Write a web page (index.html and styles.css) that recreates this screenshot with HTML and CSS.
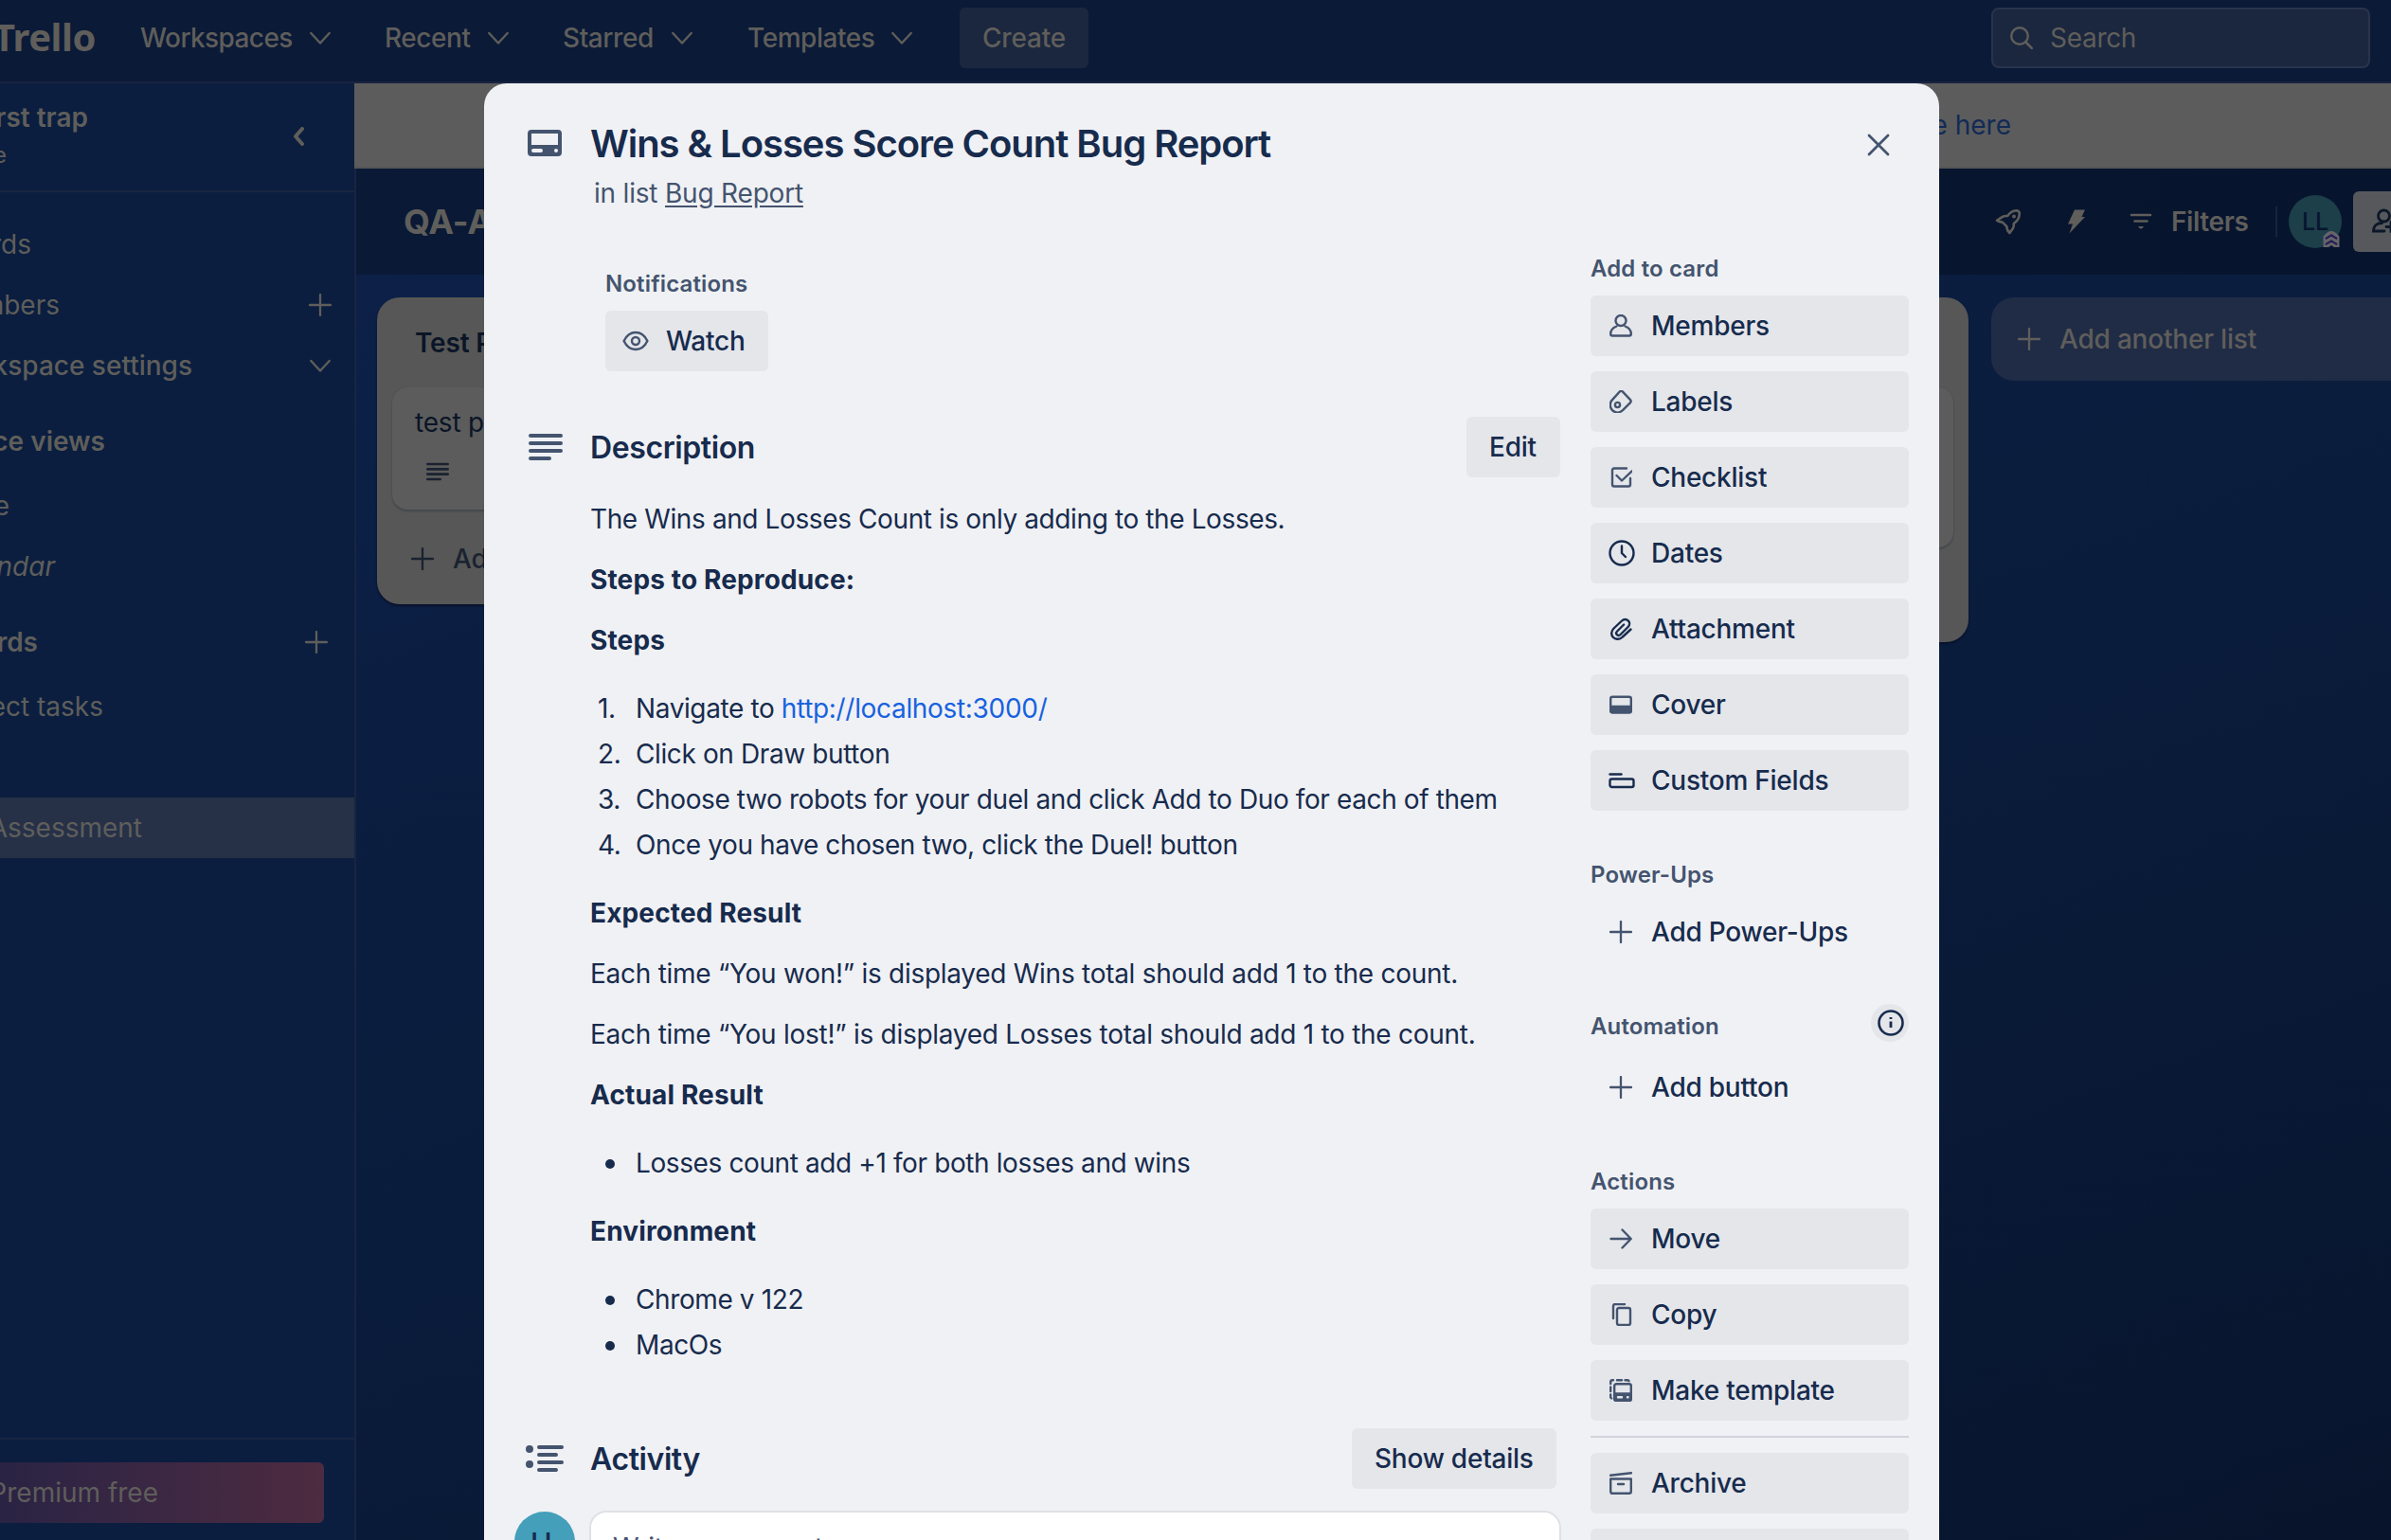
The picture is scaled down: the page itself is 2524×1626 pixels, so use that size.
FILE: index.html
```html
<!DOCTYPE html>
<html lang="en">
<head>
<meta charset="utf-8">
<title>Wins &amp; Losses Score Count Bug Report</title>
<link rel="stylesheet" href="styles.css">
</head>
<body>
<svg class="defs" aria-hidden="true">
  <symbol id="chev" viewBox="0 0 24 24"><path d="M2.300 7 12 17.500 21.700 7" fill="none" stroke="currentColor" stroke-width="2.400" stroke-linecap="round" stroke-linejoin="round"/></symbol>
  <symbol id="plus" viewBox="0 0 24 24"><path d="M12 1v22M1 12h22" fill="none" stroke="currentColor" stroke-width="2.300" stroke-linecap="round"/></symbol>
  <symbol id="lines" viewBox="0 0 36 28"><path d="M2 2h32M2 10h32M2 18h32M2 26h20" fill="none" stroke="currentColor" stroke-width="4" stroke-linecap="round"/></symbol>
</svg>
<div class="app">
  <header class="topbar">
    <span class="logo">Trello</span>
    <nav class="menu">
      <span class="item ws"><b>Workspaces</b><svg class="chev"><use href="#chev"/></svg></span>
      <span class="item rc"><b>Recent</b><svg class="chev"><use href="#chev"/></svg></span>
      <span class="item st"><b>Starred</b><svg class="chev"><use href="#chev"/></svg></span>
      <span class="item tm"><b>Templates</b><svg class="chev"><use href="#chev"/></svg></span>
    </nav>
    <span class="create">Create</span>
    <span class="search"><svg viewBox="0 0 24 24"><circle cx="10" cy="10" r="8.800" fill="none" stroke="currentColor" stroke-width="2.400"/><path d="m16.500 16.500 6.300 6.300" stroke="currentColor" stroke-width="2.600" stroke-linecap="round"/></svg>Search</span>
  </header>
  <div class="main">
    <aside class="side">
      <div class="workspace">
        <div class="names"><b>First trap</b><small>Free</small></div>
        <svg class="collapse" viewBox="0 0 12 20"><path d="M10 2 3 10l7 8" fill="none" stroke="currentColor" stroke-width="4" stroke-linecap="round" stroke-linejoin="round"/></svg>
      </div>
      <div class="row boards"><span>Boards</span></div>
      <div class="row members"><span>Members</span><svg class="act"><use href="#plus"/></svg></div>
      <div class="row settings"><span>Workspace settings</span><svg class="act"><use href="#chev"/></svg></div>
      <div class="row views"><span>Workspace views</span></div>
      <div class="row table"><span>Table</span></div>
      <div class="row calendar"><span>Calendar</span></div>
      <div class="row yours"><span>Your boards</span><svg class="act"><use href="#plus"/></svg></div>
      <div class="row tasks"><span>Project tasks</span></div>
      <div class="row current"><span>QA-Assessment</span></div>
      <div class="promo"><div class="premium"><span>Try Premium free</span></div></div>
    </aside>
    <section class="board">
      <div class="banner"><span>Subscribe here</span></div>
      <div class="boardbar">
        <h1>QA-Assessment</h1>
        <div class="tools">
          <svg class="rocket" viewBox="0 0 28 28"><path d="M25.800 5.500c-.1-2-1.300-3.300-3.300-3.300-4 .2-7 2.300-9.300 5.800-2.500-.2-4.200.2-5.700 1.200L2 12.800c1.500 1.200 3.500 1.700 5.800 1.800l4.600 4.600c0 2.500 1 5 3 6.800l3.600-5c.8-1.500 1-3 .8-5 4-2.800 6-6.500 6-10.500z" fill="none" stroke="currentColor" stroke-width="2.600" stroke-linejoin="round"/><circle cx="20" cy="8.500" r="1.900" fill="currentColor"/></svg>
          <svg class="bolt" viewBox="0 0 20 26"><path d="M8 .5h11L15.500 8H19L2.500 25.500 6 15.500H1z" fill="currentColor"/></svg>
          <svg class="filter" viewBox="0 0 24 18"><path d="M2 2h20M5.500 8.500h13" stroke="currentColor" stroke-width="2.600" stroke-linecap="round"/><path d="M9 14h6q-3 5-6 0z" fill="currentColor"/></svg>
          <span class="filters">Filters</span>
          <i class="sep"></i>
          <span class="avatar">LL<svg viewBox="0 0 18 18"><path d="M0 6Q9-6 18 6v12h-6l-3-2-3 2H0z" fill="#66636a"/><path d="m2.500 8.500 6.500-4 6.500 4M2.500 15l6.500-4 6.500 4" fill="none" stroke="#211c55" stroke-width="2.200"/></svg></span>
          <span class="share"><svg viewBox="0 0 32 28"><circle cx="13.500" cy="8" r="6" fill="none" stroke="currentColor" stroke-width="2.800"/><path d="M14 24H2.500c0-6 4-8.500 9-8.500M16 19.500h10M21 14.500v10" fill="none" stroke="currentColor" stroke-width="2.800" stroke-linecap="round"/></svg></span>
        </div>
      </div>
      <div class="lists">
        <div class="list">
          <h2>Test Plan</h2>
          <div class="card">test plan<svg><use href="#lines"/></svg></div>
          <div class="addcard"><svg><use href="#plus"/></svg>Add a card</div>
        </div>
        <div class="list"></div>
        <div class="list tall"><h2></h2><div class="card"></div></div>
        <div class="newlist"><svg><use href="#plus"/></svg>Add another list</div>
      </div>
    </section>
  </div>
</div>
<div class="modal">
  <div class="head">
    <svg class="cardicon" viewBox="0 0 36 28"><path fill="currentColor" fill-rule="evenodd" d="M4 0h28a4 4 0 0 1 4 4v20a4 4 0 0 1-4 4H4a4 4 0 0 1-4-4V4a4 4 0 0 1 4-4zM4 4v12h28V4zM6 20a2 2 0 0 0 0 4h8a2 2 0 0 0 0-4zM30 20a2 2 0 0 0 0 4 2 2 0 0 0 0-4z"/></svg>
    <div class="titles"><h1>Wins &amp; Losses Score Count Bug Report</h1><p>in list <u>Bug Report</u></p></div>
    <svg class="close" viewBox="0 0 24 24"><path d="M2 2l20 20M22 2 2 22" stroke="currentColor" stroke-width="2.800" stroke-linecap="round"/></svg>
  </div>
  <div class="cols">
    <div class="content">
      <h3 class="label">Notifications</h3>
      <span class="btn watch"><svg viewBox="0 0 28 24"><path d="M14 3C8 3 4 7 1.600 12 4 17 8 21 14 21s10-4 12.400-9C24 7 20 3 14 3z" fill="none" stroke="currentColor" stroke-width="2.400"/><circle cx="14" cy="12" r="4" fill="none" stroke="currentColor" stroke-width="2.400"/></svg>Watch</span>
      <div class="sect desc"><svg class="ic"><use href="#lines"/></svg><h2>Description</h2><span class="btn">Edit</span></div>
      <div class="text">
        <p>The Wins and Losses Count is only adding to the Losses.</p>
        <p><b>Steps to Reproduce:</b></p>
        <p><b>Steps</b></p>
        <ol>
          <li><i>1.</i>Navigate to&nbsp;<a>http://localhost:3000/</a></li>
          <li><i>2.</i>Click on Draw button</li>
          <li><i>3.</i>Choose two robots for your duel and click Add to Duo for each of them</li>
          <li><i>4.</i>Once you have chosen two, click the Duel! button</li>
        </ol>
        <p><b>Expected Result</b></p>
        <p class="result">Each time “You won!” is displayed Wins total should add 1 to the count.</p>
        <p class="result">Each time “You lost!” is displayed Losses total should add 1 to the count.</p>
        <p><b>Actual Result</b></p>
        <ul><li>Losses count add +1 for both losses and wins</li></ul>
        <p><b>Environment</b></p>
        <ul><li>Chrome v 122</li><li>MacOs</li></ul>
      </div>
      <div class="sect activity"><svg class="ic act2" viewBox="0 0 40 28"><circle cx="4" cy="4" r="4" fill="currentColor"/><circle cx="4" cy="20" r="4" fill="currentColor"/><path d="M14 2h24M14 10h18M14 18h24M14 26h18" stroke="currentColor" stroke-width="4" stroke-linecap="round"/></svg><h2>Activity</h2><span class="btn">Show details</span></div>
      <div class="comment"><span class="me">LL</span><span class="field">Write a comment…</span></div>
    </div>
    <div class="rail">
      <h3 class="label">Add to card</h3>
      <span class="btn"><svg viewBox="0 0 24 24"><circle cx="12" cy="6.500" r="5.500"/><path d="M7.500 12.500C3.500 14 1.200 17 1.200 20.500c0 1.300.6 2 2 2h17.600c1.400 0 2-.7 2-2 0-3.500-2.300-6.500-6.300-8"/></svg>Members</span>
      <span class="btn"><svg viewBox="0 0 24 24"><path d="M11 1.300q1.500-1 3 .3l8 8.500q1.300 1.500 0 3l-8 8c-3.500 3-8 3-11 0s-3-8 0-11z"/><circle cx="8.500" cy="15.500" r="2.600"/></svg>Labels</span>
      <span class="btn"><svg viewBox="0 0 24 24"><path d="M18 2.500H5q-2 0-2 2v15q0 2 2 2h15q2 0 2-2V13M7.500 10l5.500 5.500L23.500 5.500"/></svg>Checklist</span>
      <span class="btn dark"><svg class="big" viewBox="0 0 28 28"><circle cx="14" cy="14" r="12.500"/><path d="M14 6.500V14l4 4"/></svg>Dates</span>
      <span class="btn dark"><svg viewBox="0 0 24 24"><path d="M22.500 12.500 13.800 20.500c-3 3-7.300 3-9.800.5s-2.500-6.500.5-9.500l8.500-8c2-2 5-2 6.800-.2s1.800 4.700-.2 6.700l-8 8c-1.200 1.200-2.700 1.200-3.700.2s-1-2.500.2-3.700l7-7"/></svg>Attachment</span>
      <span class="btn"><svg viewBox="0 0 24 24"><rect x="1.200" y="3.700" width="21.600" height="16.600" rx="2"/><path d="M1.200 14h21.600v4.500q0 1.800-1.800 1.800H3q-1.800 0-1.800-1.800z" fill="currentColor"/></svg>Cover</span>
      <span class="btn dark"><svg class="big" viewBox="0 0 28 28"><path d="M1.500 7.500h12"/><rect x="1.500" y="12.500" width="25" height="8.500" rx="2"/></svg>Custom Fields</span>
      <h3 class="label pu">Power-Ups</h3>
      <span class="btn ghost"><svg><use href="#plus"/></svg>Add Power-Ups</span>
      <div class="autohead"><h3 class="label">Automation</h3><span class="info"><svg viewBox="0 0 28 28"><circle cx="14" cy="14" r="12.500" fill="none" stroke="currentColor" stroke-width="2.600"/><path d="M14 12.500V19M14 8v2" stroke="currentColor" stroke-width="2.800"/></svg></span></div>
      <span class="btn ghost"><svg><use href="#plus"/></svg>Add button</span>
      <h3 class="label ac">Actions</h3>
      <span class="btn"><svg viewBox="0 0 24 24"><path d="M1.500 12h21M13.500 2.500l9.200 9.500-9.200 9.500"/></svg>Move</span>
      <span class="btn"><svg viewBox="0 0 24 24"><path d="M4 16V3q0-2 2-2h10"/><rect x="8" y="5" width="14" height="18" rx="2"/></svg>Copy</span>
      <span class="btn"><svg viewBox="0 0 24 24"><path d="M1.200 5V3q0-1.800 1.800-1.800h1M8 1.200h5M16.500 1.200h3l1 1M1.200 8.500V13M1.200 16.500v3l1 1"/><rect x="5.200" y="5.200" width="17.600" height="17.600" rx="2"/><path d="M5.200 15.500h17.600V21q0 1.800-1.800 1.800H7Q5.200 22.800 5.200 21z" fill="currentColor"/><path class="lt" d="M9 19.300h4M19 19.300h.5"/></svg>Make template</span>
      <hr>
      <span class="btn"><svg viewBox="0 0 24 24"><path d="M1 3.800 23 1.300M1.200 7.500h21.600v13.300q0 2-2 2H3.200q-2 0-2-2zM9 13h6"/></svg>Archive</span>
      <span class="btn">Share</span>
    </div>
  </div>
</div>
</body>
</html>
```
FILE: styles.css
```css
* { box-sizing: border-box; }
body { margin: 0; width: 2524px; height: 1626px; overflow: hidden; position: relative; font: 400 28px/40px Inter, "Liberation Sans", sans-serif; letter-spacing: -0.2px; color: #172b4d; }
h1, h2, h3, p, ol, ul, hr { margin: 0; padding: 0; }
svg { display: block; flex: none; }
.defs { position: absolute; width: 0; height: 0; }
.app { height: 1626px; display: flex; flex-direction: column; color: #5f5e5b; overflow: hidden; }
.topbar { height: 88px; flex: none; display: flex; background: #0b1a37; border-bottom: 2px solid #18243f; padding-top: 8px; font-weight: 500; }
.logo { width: 155px; margin-left: -7px; flex: none; font: 700 40px/62px "Noto Sans", sans-serif; letter-spacing: -0.5px; }
.menu { display: flex; height: 64px; }
.item { display: flex; align-items: center; justify-content: space-between; }
.item b { font-weight: 500; letter-spacing: -0.45px; }
.ws { width: 202px; margin-right: 56px; }
.rc { width: 132px; margin-right: 56px; }
.st { width: 138px; margin-right: 57px; }
.tm { width: 175px; margin-right: 49px; }
.ws b { letter-spacing: -0.6px; }
.chev { width: 24px; height: 24px; }
.create { width: 136px; height: 64px; line-height: 65px; border-radius: 6px; background: #1b273e; text-align: center; }
.search { margin-left: auto; margin-right: 22px; width: 400px; height: 64px; border: 2px solid #29344c; border-radius: 8px; background: #1b273e; display: flex; align-items: center; gap: 18px; padding-left: 18px; font-weight: 400; letter-spacing: -0.3px; }
.search svg { width: 24px; height: 24px; }
.main { flex: 1; min-height: 0; display: flex; }
.side { width: 376px; flex: none; background: #0b1e3f; border-right: 2px solid #182541; display: flex; flex-direction: column; overflow: hidden; }
.workspace { height: 115px; flex: none; border-bottom: 2px solid #182541; display: flex; padding-top: 16px; justify-content: space-between; }
.names { width: 93px; display: flex; flex-direction: column; align-items: flex-end; white-space: nowrap; letter-spacing: 0; }
.names b { font-weight: 600; }
.names small { font-size: 24px; line-height: 40px; margin-right: 86px; }
.collapse { width: 12px; height: 20px; margin: 30px 53px 0 0; }
.row { height: 64px; flex: none; display: flex; align-items: center; justify-content: space-between; white-space: nowrap; padding-right: 24px; letter-spacing: 0; }
.row span { display: flex; justify-content: flex-end; }
.row .act { width: 24px; height: 24px; }
.boards { margin-top: 23px; }
.boards span { width: 33px; }
.members span { width: 63px; }
.settings span { width: 203px; font-weight: 500; }
.views { margin-top: 16px; font-weight: 600; }
.views span { width: 111px; }
.table { margin-top: 4px; }
.table span { width: 10px; }
.calendar { font-style: italic; }
.calendar span { width: 58px; }
.yours { margin-top: 16px; font-weight: 600; padding-right: 28px; }
.yours span { width: 40px; }
.tasks { margin-top: 4px; }
.tasks span { width: 109px; }
.current { margin-top: 64px; background: #263148; }
.current span { width: 150px; }
.promo { margin-top: auto; height: 108px; flex: none; border-top: 2px solid #182541; padding-top: 24px; }
.premium { width: 342px; height: 64px; border-radius: 0 6px 6px 0; background: linear-gradient(90deg, #2a2344, #3a2743 45%, #4d2b40); display: flex; align-items: center; letter-spacing: 0; }
.premium span { width: 167px; display: flex; justify-content: flex-end; white-space: nowrap; }
.board { flex: 1; min-width: 0; background: linear-gradient(160deg, #0d204a 0%, #0a1d3d 45%, #091a37 70%, #08142c 100%); }
.banner { height: 90px; margin-left: -2px; background: #5c5c5c; border-bottom: 2px solid #555; display: flex; justify-content: flex-end; padding: 24px 401px 0 0; color: #122a56; letter-spacing: 0; }
.boardbar { height: 112px; background: linear-gradient(90deg, #0a1936, #07142d); display: flex; align-items: center; padding-left: 50px; overflow: hidden; }
.boardbar h1 { font: 700 36px/44px Inter, sans-serif; width: 1681px; flex: none; }
.tools { display: flex; align-items: center; flex: none; }
.rocket { width: 28px; height: 28px; margin-left: -1px; }
.bolt { width: 20px; height: 26px; margin-left: 48px; }
.filter { width: 24px; height: 18px; margin-left: 46px; }
.filters { margin-left: 20px; width: 110px; font-weight: 600; letter-spacing: -0.4px; }
.sep { width: 2px; height: 32px; background: #18243c; }
.avatar { width: 56px; height: 56px; border-radius: 50%; background: #1c3f4a; color: #08162d; margin-left: 12px; font: 500 25px/56px Inter, sans-serif; text-align: center; position: relative; }
.avatar svg { position: absolute; right: 2px; bottom: 1px; width: 18px; height: 17px; }
.share { width: 64px; height: 64px; margin-left: 12px; border-radius: 6px; background: #56585c; color: #0c1729; padding: 18px 0 0 19px; }
.share svg { width: 32px; height: 28px; }
.lists { display: flex; align-items: flex-start; gap: 24px; padding: 24px 0 0 22px; width: 2300px; }
.list { width: 544px; height: 324px; border-radius: 24px; background: #575757; color: #0a1527; padding: 0 16px; flex: none; box-shadow: 0 2px 2px #07122a; }
.list h2 { font: 600 28px/40px Inter, sans-serif; height: 95px; padding: 28px 0 0 24px; }
.card { height: 129px; border-radius: 16px; background: #5c5c5c; box-shadow: 0 2px 2px #45474b, 0 0 1px #45474b; padding: 17px 0 0 24px; }
.card svg { width: 24px; height: 24px; margin: 20px 0 0 12px; color: #1a2230; }
.addcard { display: flex; align-items: center; gap: 20px; padding: 32px 0 0 20px; color: #1a2230; font-weight: 500; }
.addcard svg, .newlist svg { width: 24px; height: 24px; }
.tall { height: 364px; }
.tall .card { height: 169px; }
.newlist { width: 544px; height: 88px; flex: none; border-radius: 24px; background: #202c46; display: flex; align-items: center; gap: 20px; padding-left: 28px; font-weight: 500; }
.modal { position: absolute; left: 511px; top: 88px; width: 1536px; height: 1538px; border-radius: 24px 24px 0 0; background: #f0f1f4; overflow: hidden; }
.head { display: flex; height: 168px; padding: 44px 52px 0 46px; }
.cardicon { width: 36px; height: 28px; margin-top: 5px; color: #44546f; }
.titles { margin-left: 30px; flex: 1; }
.titles h1 { font: 600 40px/40px Inter, sans-serif; letter-spacing: -1.04px; white-space: nowrap; }
.titles p { padding: 12px 0 0 4px; color: #44546f; }
.titles u { text-underline-offset: 3px; }
.close { width: 24px; height: 24px; margin-top: 9px; color: #44546f; }
.cols { display: flex; }
.content { width: 1136px; padding: 24px 0 0 112px; flex: none; }
.label { font: 600 24px/32px Inter, sans-serif; letter-spacing: 0.14px; color: #44546f; }
.content > .label { margin: 4px 0 0 16px; }
.btn { display: flex; align-items: center; height: 64px; border-radius: 6px; background: #e4e6ea; font-weight: 500; white-space: nowrap; letter-spacing: -0.24px; }
.watch { width: 172px; margin: 12px 0 0 16px; padding-left: 18px; gap: 18px; }
.watch svg { width: 28px; height: 24px; color: #44546f; }
.sect { display: flex; align-items: center; color: #172b4d; }
.sect h2 { font: 600 32px/40px Inter, sans-serif; letter-spacing: -0.4px; flex: 1; padding-top: 2px; }
.sect .ic { width: 36px; height: 28px; margin: 0 30px 0 -65px; color: #44546f; }
.sect .act2 { width: 40px; margin: 0 29px 0 -68px; }
.sect h2 { margin-left: -1px; }
.sect .btn { padding: 0 24px; }
.desc { margin-top: 48px; }
.desc .btn { width: 99px; }
.text { margin-top: 24px; white-space: nowrap; letter-spacing: -0.39px; }
.text p { height: 40px; margin-bottom: 24px; }
.text .result { letter-spacing: -0.27px; }
.text b { font-weight: 700; letter-spacing: 0.14px; }
.text ol, .text ul { list-style: none; margin: 32px 0; }
.text li { height: 40px; margin-bottom: 8px; padding-left: 48px; display: flex; }
.text li:last-child { margin-bottom: 0; }
.text li i { font-style: normal; width: 40px; margin-left: -40px; }
.text ul li::before { content: ""; width: 10px; height: 10px; border-radius: 50%; background: currentColor; margin: 16px 22px 0 -32px; }
.text a { color: #1862df; letter-spacing: -0.32px; }
.activity { margin-top: 68px; }
.activity .btn { width: 216px; margin-right: 4px; }
.comment { display: flex; margin: 23px 0 0 -80px; }
.me { width: 64px; height: 64px; margin-top: 1px; border-radius: 50%; background: #449fba; font: 600 26px/64px Inter, sans-serif; text-align: center; }
.field { margin-left: 15px; margin-right: -1px; flex: 1; height: 80px; border: 2px solid #dfe1e6; border-radius: 18px; background: #fff; color: #44546f; padding: 17px 23px; }
.rail { width: 336px; margin-left: 32px; padding-top: 12px; display: flex; flex-direction: column; }
.rail .label { margin-bottom: 12px; }
.rail .btn { margin-bottom: 16px; padding-left: 20px; gap: 20px; flex: none; }
.rail .btn svg { width: 24px; height: 24px; color: #44546f; fill: none; stroke: currentColor; stroke-width: 2.4; stroke-linecap: round; stroke-linejoin: round; }
.rail .btn svg.big { width: 28px; height: 28px; margin: 0 -3px 0 -1px; }
.rail .dark svg { color: #172b4d; }
.rail .lt { stroke: #e4e6ea; }
.rail .ghost { background: none; }
.rail .pu { margin: 36px 0 12px; }
.rail .label + .ghost { margin-bottom: 0; }
.autohead { display: flex; justify-content: space-between; align-items: flex-start; height: 56px; margin-top: 44px; }
.autohead .label { margin-top: 8px; }
.info { width: 40px; height: 40px; border-radius: 50%; background: #e4e6ea; padding: 6px 0 0 7px; }
.info svg { width: 28px; height: 28px; }
.rail .ac { margin: 36px 0 12px; }
.rail .autohead + .ghost { margin-bottom: 16px; }
.rail hr { border: 0; height: 2px; background: #d0d4db; margin-bottom: 16px; }
```
